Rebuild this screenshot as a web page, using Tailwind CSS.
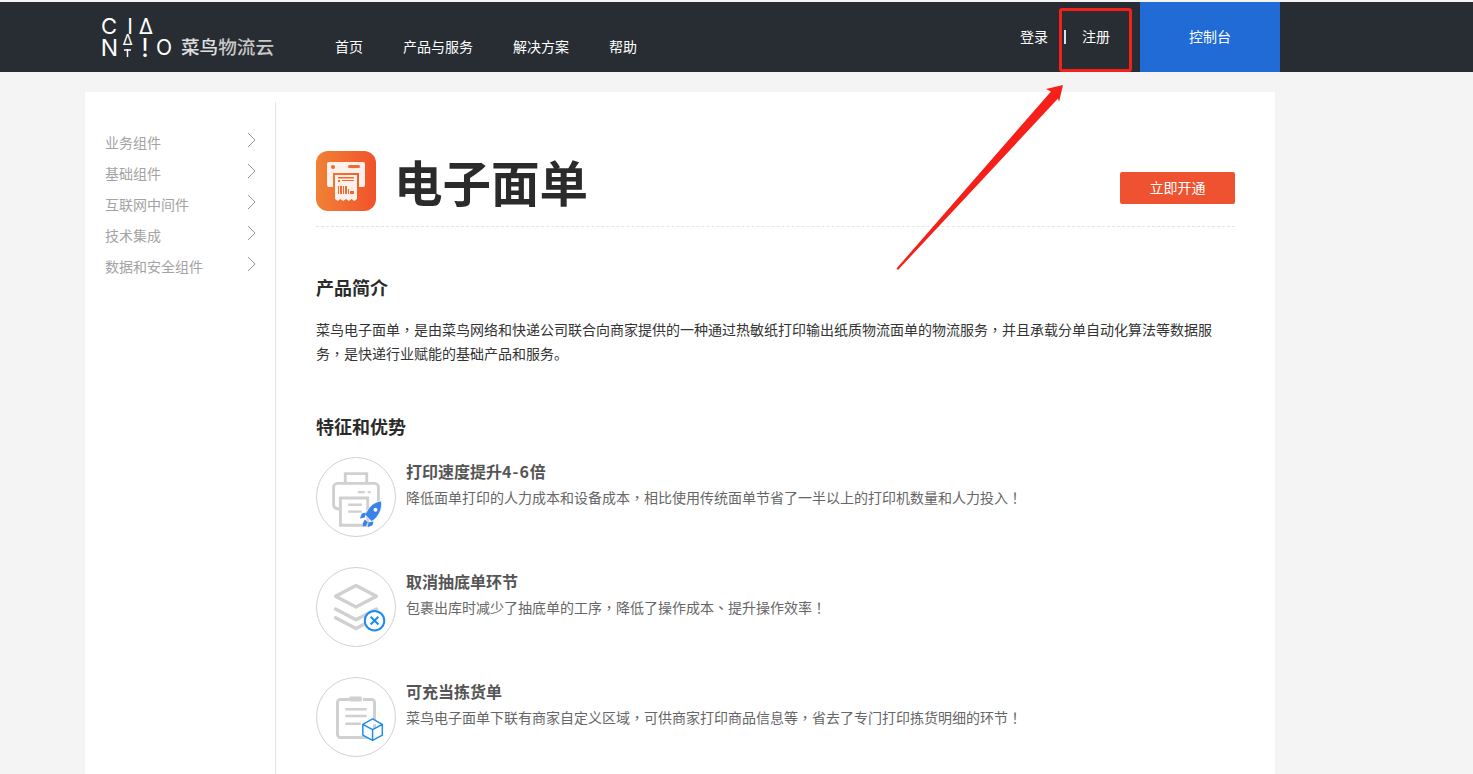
<!DOCTYPE html>
<html lang="zh-CN">
<head>
    <meta charset="UTF-8">
    <title>电子面单</title>
    <script src="https://cdn.jsdelivr.net/npm/@tailwindcss/browser@4"></script>
</head>
<body class="relative h-[774px] overflow-hidden bg-[#f4f4f4] pt-[2px] font-['Liberation_Sans','Noto_Sans_CJK_SC',sans-serif] text-[14px]">
    <!-- Header -->
    <header class="flex h-[70px] bg-[#282d34] text-white">
        <a class="mt-[14px] ml-[100px] flex w-[235px] shrink-0 items-start" href="#">
            <svg class="h-[46px] w-[80px] shrink-0 overflow-visible font-['Inter',sans-serif]" viewBox="0 0 80 46" fill="#fff" text-anchor="middle">
                <text x="9" y="18" font-size="22">C</text>
                <text x="30" y="18" font-size="21">I</text>
                <text x="46" y="18" font-size="21">Δ</text>
                <text x="9.500" y="40" font-size="23">N</text>
                <text x="27.500" y="29" font-size="15">Δ</text>
                <path stroke="#fff" stroke-width="1.500" d="M27.500 33v8M24 34h7"/>
                <text x="45" y="41" font-size="26">!</text>
                <text x="64" y="39" font-size="21">O</text>
            </svg>
            <span class="mt-[21px] ml-[1px] text-[18.600px] leading-[22px] font-medium text-[#e0e0e0]">菜鸟<span class="text-[#c8c8c8]">物流云</span></span>
        </a>
        <nav class="flex gap-[40px] pt-[36px] text-[14px] leading-[18px]">
            <a href="#">首页</a>
            <a href="#">产品与服务</a>
            <a href="#">解决方案</a>
            <a href="#">帮助</a>
        </nav>
        <div class="ml-auto flex pt-[26px] leading-[18px]">
            <a href="#">登录</a>
            <span class="mt-[2px] mr-[16px] ml-[16px] h-[14px] w-[2px] bg-[#d5e4ee]"></span>
            <a href="#" class="mr-[1px]">注册</a>
        </div>
        <a href="#" class="mr-[193px] ml-[29px] h-[70px] w-[140px] bg-[#206bd6] pt-[26px] text-center leading-[18px]">控制台</a>
    </header>

    <main class="mx-[85px] mt-[20px] flex h-[700px] w-[1190px] bg-white">
        <!-- Sidebar -->
        <aside class="mt-[10px] w-[191px] shrink-0 border-r border-[#e3e3e3] pt-[26px] pl-[20px] text-[#a3a3a3]">
            <ul>
                <li class="flex h-[31px] items-center justify-between pr-[19px]">业务组件<svg class="mb-[7px] h-[16px] w-[9px]" viewBox="0 0 9 16" fill="none" stroke="#999" stroke-width="1"><path d="M1 1l7 7-7 7"/></svg></li>
                <li class="flex h-[31px] items-center justify-between pr-[19px]">基础组件<svg class="mb-[7px] h-[16px] w-[9px]" viewBox="0 0 9 16" fill="none" stroke="#999" stroke-width="1"><path d="M1 1l7 7-7 7"/></svg></li>
                <li class="flex h-[31px] items-center justify-between pr-[19px]">互联网中间件<svg class="mb-[7px] h-[16px] w-[9px]" viewBox="0 0 9 16" fill="none" stroke="#999" stroke-width="1"><path d="M1 1l7 7-7 7"/></svg></li>
                <li class="flex h-[31px] items-center justify-between pr-[19px]">技术集成<svg class="mb-[7px] h-[16px] w-[9px]" viewBox="0 0 9 16" fill="none" stroke="#999" stroke-width="1"><path d="M1 1l7 7-7 7"/></svg></li>
                <li class="flex h-[31px] items-center justify-between pr-[19px]">数据和安全组件<svg class="mb-[7px] h-[16px] w-[9px]" viewBox="0 0 9 16" fill="none" stroke="#999" stroke-width="1"><path d="M1 1l7 7-7 7"/></svg></li>
            </ul>
        </aside>

        <!-- Content -->
        <section class="ml-[40px] w-[919px] pt-[59px] text-[#333]">
            <div class="flex h-[76px] items-start border-b border-dashed border-[#e4e4e4]">
                <div class="flex h-[60px] w-[60px] items-center justify-center rounded-[12px] bg-gradient-to-r from-[#f08136] to-[#f0512b]">
                    <svg class="h-[44px] w-[44px]" viewBox="0 0 44 44">
                        <path fill="#fff" fill-opacity=".9" d="M5 3h34a2 2 0 0 1 2 2v21a2 2 0 0 1-2 2h-4V14H9v14H5a2 2 0 0 1-2-2V5a2 2 0 0 1 2-2z"/>
                        <circle cx="9" cy="8" r="2" fill="#f2682f"/><rect x="24" y="6" width="12" height="3" rx="1.5" fill="#f2682f"/>
                        <path fill="#fff" fill-opacity=".9" d="M11 16h22v24l-2.700 2-2.700-2-2.800 2-2.800-2-2.800 2-2.800-2-2.700 2-2.700-2z"/>
                        <path fill="#f2682f" d="M14 18h16v1.500H14zM14 21h2v2h-2zM18 21h12v1h-12zM14 27h1v8h-1zM16 27h2v8h-2zM19 27h1v8h-1zM21 27h2v8h-2zM24 30h1v5h-1zM26 32h4v3h-4z"/>
                    </svg>
                </div>
                <h1 class="ml-[18px] text-[48.500px] leading-[68px] font-bold text-[#2b2b2b]">电子面单</h1>
                <a href="#" class="mt-[21px] ml-auto h-[32px] w-[115px] rounded-[2px] bg-[#ef5230] text-center leading-[32px] text-white">立即开通</a>
            </div>

            <h2 class="mt-[49px] text-[18px] leading-[26px] font-bold text-[#2b2b2b]">产品简介</h2>
            <p class="mt-[16px] w-[919px] leading-[24px] text-[#333]">菜鸟电子面单<span lang="zh-TW" class="font-['Noto_Sans_CJK_TC'] leading-[0]">，</span>是由菜鸟网络和快递公司联合向商家提供的一种通过热敏纸打印输出纸质物流面单的物流服务<span lang="zh-TW" class="font-['Noto_Sans_CJK_TC'] leading-[0]">，</span>并且承载分单自动化算法等数据服务<span lang="zh-TW" class="font-['Noto_Sans_CJK_TC'] leading-[0]">，</span>是快递行业赋能的基础产品和服务。</p>

            <h2 class="mt-[49px] text-[18px] leading-[26px] font-bold text-[#2b2b2b]">特征和优势</h2>

            <div class="mt-[16px] flex h-[110px] items-start">
                <div class="h-[80px] w-[80px] shrink-0 rounded-full border border-[#d2d2d2]">
                    <svg viewBox="0 0 80 80" class="h-full w-full" fill="none">
                        <path stroke="#d0d0d0" stroke-width="3" d="M29 26V16h22v10M24 52h-3a4 4 0 0 1-4-4V30a4 4 0 0 1 4-4h38a4 4 0 0 1 4 4v18a4 4 0 0 1-4 4h-3M24 41h28v28H24z"/>
                        <path stroke="#d0d0d0" stroke-width="2.500" d="M32 48h14M32 55h14M42 35h7M52 35h3"/>
                        <path fill="#3a81ea" stroke="#fff" stroke-width=".75" d="M66 44c1 7-1 13-7 19l-3 2-7-7 2-3c3-6 8-10 15-11z"/>
                        <path fill="#3a81ea" d="M50 56l-4 1-2 5 5-1zM58 65l-1 4 -5 2 1-5zM49 63l3 3-2 4-3 0 0-3z"/>
                        <circle cx="60" cy="53" r="2" fill="#fff"/>
                    </svg>
                </div>
                <div class="ml-[10px]">
                    <h3 class="mt-[4px] text-[16px] leading-[24px] font-bold text-[#555]">打印速度提升<span class="font-['Noto_Sans_CJK_SC'] leading-[0] tracking-[1px]">4-6</span>倍</h3>
                    <p class="mt-[2px] leading-[22px] text-[#666]">降低面单打印的人力成本和设备成本<span lang="zh-TW" class="font-['Noto_Sans_CJK_TC'] leading-[0]">，</span>相比使用传统面单节省了一半以上的打印机数量和人力投入<span lang="zh-TW" class="font-['Noto_Sans_CJK_TC'] leading-[0]">！</span></p>
                </div>
            </div>

            <div class="flex h-[110px] items-start">
                <div class="h-[80px] w-[80px] shrink-0 rounded-full border border-[#d2d2d2]">
                    <svg viewBox="0 0 80 80" class="h-full w-full" fill="none">
                        <path stroke="#d0d0d0" stroke-width="3.500" stroke-linejoin="round" d="M40 18l21 11-21 11-21-11z"/>
                        <path stroke="#d0d0d0" stroke-width="3.500" stroke-linecap="round" stroke-linejoin="round" d="M19 42l21 11 21-11M19 51l21 11 21-11"/>
                        <circle cx="59" cy="54" r="10" fill="#fff" stroke="#1b8cf0" stroke-width="2"/>
                        <path stroke="#1b8cf0" stroke-width="2" d="M55 50l8 8M63 50l-8 8"/>
                    </svg>
                </div>
                <div class="ml-[10px]">
                    <h3 class="mt-[4px] text-[16px] leading-[24px] font-bold text-[#555]">取消抽底单环节</h3>
                    <p class="mt-[2px] leading-[22px] text-[#666]">包裹出库时减少了抽底单的工序<span lang="zh-TW" class="font-['Noto_Sans_CJK_TC'] leading-[0]">，</span>降低了操作成本<span lang="zh-TW" class="font-['Noto_Sans_CJK_TC'] leading-[0]">、</span>提升操作效率<span lang="zh-TW" class="font-['Noto_Sans_CJK_TC'] leading-[0]">！</span></p>
                </div>
            </div>

            <div class="flex h-[110px] items-start">
                <div class="h-[80px] w-[80px] shrink-0 rounded-full border border-[#d2d2d2]">
                    <svg viewBox="0 0 80 80" class="h-full w-full" fill="none">
                        <path stroke="#d0d0d0" stroke-width="3" d="M33 22h-9a3 3 0 0 0-3 3v33a3 3 0 0 0 3 3h32a3 3 0 0 0 3-3V25a3 3 0 0 0-3-3h-9"/>
                        <rect x="33" y="19" width="13" height="5" rx="1.500" fill="#d0d0d0"/>
                        <path stroke="#d0d0d0" stroke-width="2.500" d="M29 32h22M29 39h22M29 47h16"/>
                        <path fill="#fff" stroke="#1b8cf0" stroke-width="1.500" stroke-linejoin="round" d="M57 42l10 5.500v11L57 64l-10-5.500v-11zM47 47.500l10 5.500 10-5.500M57 53v11"/>
                    </svg>
                </div>
                <div class="ml-[10px]">
                    <h3 class="mt-[4px] text-[16px] leading-[24px] font-bold text-[#555]">可充当拣货单</h3>
                    <p class="mt-[2px] leading-[22px] text-[#666]">菜鸟电子面单下联有商家自定义区域<span lang="zh-TW" class="font-['Noto_Sans_CJK_TC'] leading-[0]">，</span>可供商家打印商品信息等<span lang="zh-TW" class="font-['Noto_Sans_CJK_TC'] leading-[0]">，</span>省去了专门打印拣货明细的环节<span lang="zh-TW" class="font-['Noto_Sans_CJK_TC'] leading-[0]">！</span></p>
                </div>
            </div>
        </section>
    </main>

    <!-- Annotation drawn over the page -->
    <div class="absolute top-[8px] left-[1059px] h-[64px] w-[73px] rounded-[3px] border-[3px] border-[#f5201a]"></div>
    <svg class="absolute top-0 left-0 h-[774px] w-[1473px]" viewBox="0 0 1473 774">
        <path fill="#f5201a" d="M1063 85l-17 4 5 2.500L896.500 268.500 898 270 1058 98.500l1 3.500z"/>
    </svg>
</body>
</html>
